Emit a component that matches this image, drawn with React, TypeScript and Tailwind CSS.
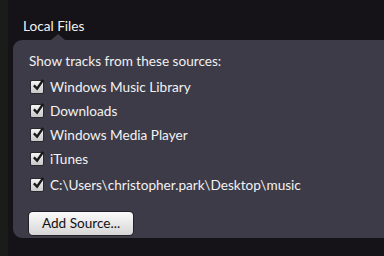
import { useState } from 'react'

const sources = [
  'Windows Music Library',
  'Downloads',
  'Windows Media Player',
  'iTunes',
  'C:\\Users\\christopher.park\\Desktop\\music',
]

function Check() {
  return (
    <span className="relative w-[12px] h-[12px] shrink-0 rounded-[1px] bg-gradient-to-b from-[#f4f4f4] to-[#c8c8c8] shadow-[0_0_0_1px_#2a2930]">
      <svg viewBox="0 0 14 14" className="absolute left-[1px] top-[-3px] w-[13px] h-[13px]">
        <path d="M2 8 L5.5 11.5 L12 2" fill="none" stroke="#1a1a1a" strokeWidth="2.6" />
      </svg>
    </span>
  )
}

export default function App() {
  const [checked] = useState(sources.map(() => true))

  return (
    <div className="w-[384px] h-[256px] flex bg-[#151317] overflow-hidden font-['Lato','Open_Sans',sans-serif] text-[13.6px]">
      <div className="w-[8px] bg-[#1a1c1a]" />
      <div className="flex-1 flex flex-col pl-[5px]">
        <div className="h-[40px] pt-[16px] pl-[10px] text-[#f2f2f2] leading-[20px]">Local Files</div>
        <div className="relative h-[198px] bg-[#3d3b47] rounded-l-[9px] pl-[16px] pt-[12px]">
          <span className="absolute left-[38px] top-[-6px] w-0 h-0 border-l-[7px] border-r-[7px] border-b-[6px] border-l-transparent border-r-transparent border-b-[#3d3b47]" />
          <div className="text-[#f0f0f0] leading-[18px]">Show tracks from these sources:</div>
          <div className="mt-[5px] flex flex-col">
            {sources.map((s, i) => (
              <div key={s} className={`flex items-center gap-[7px] pl-[2px] h-[24px] ${i === 4 ? 'mt-[2px]' : ''}`}>
                {checked[i] && <Check />}
                <span className="text-[#f2f2f2]">{s}</span>
              </div>
            ))}
          </div>
          <button className="mt-[15px] h-[23px] w-[104px] rounded-[4px] bg-gradient-to-b from-[#fbfbfb] to-[#d6d6d6] text-[#111] shadow-[0_0_0_1px_#22212a] leading-[23px]">
            Add Source...
          </button>
        </div>
      </div>
    </div>
  )
}
